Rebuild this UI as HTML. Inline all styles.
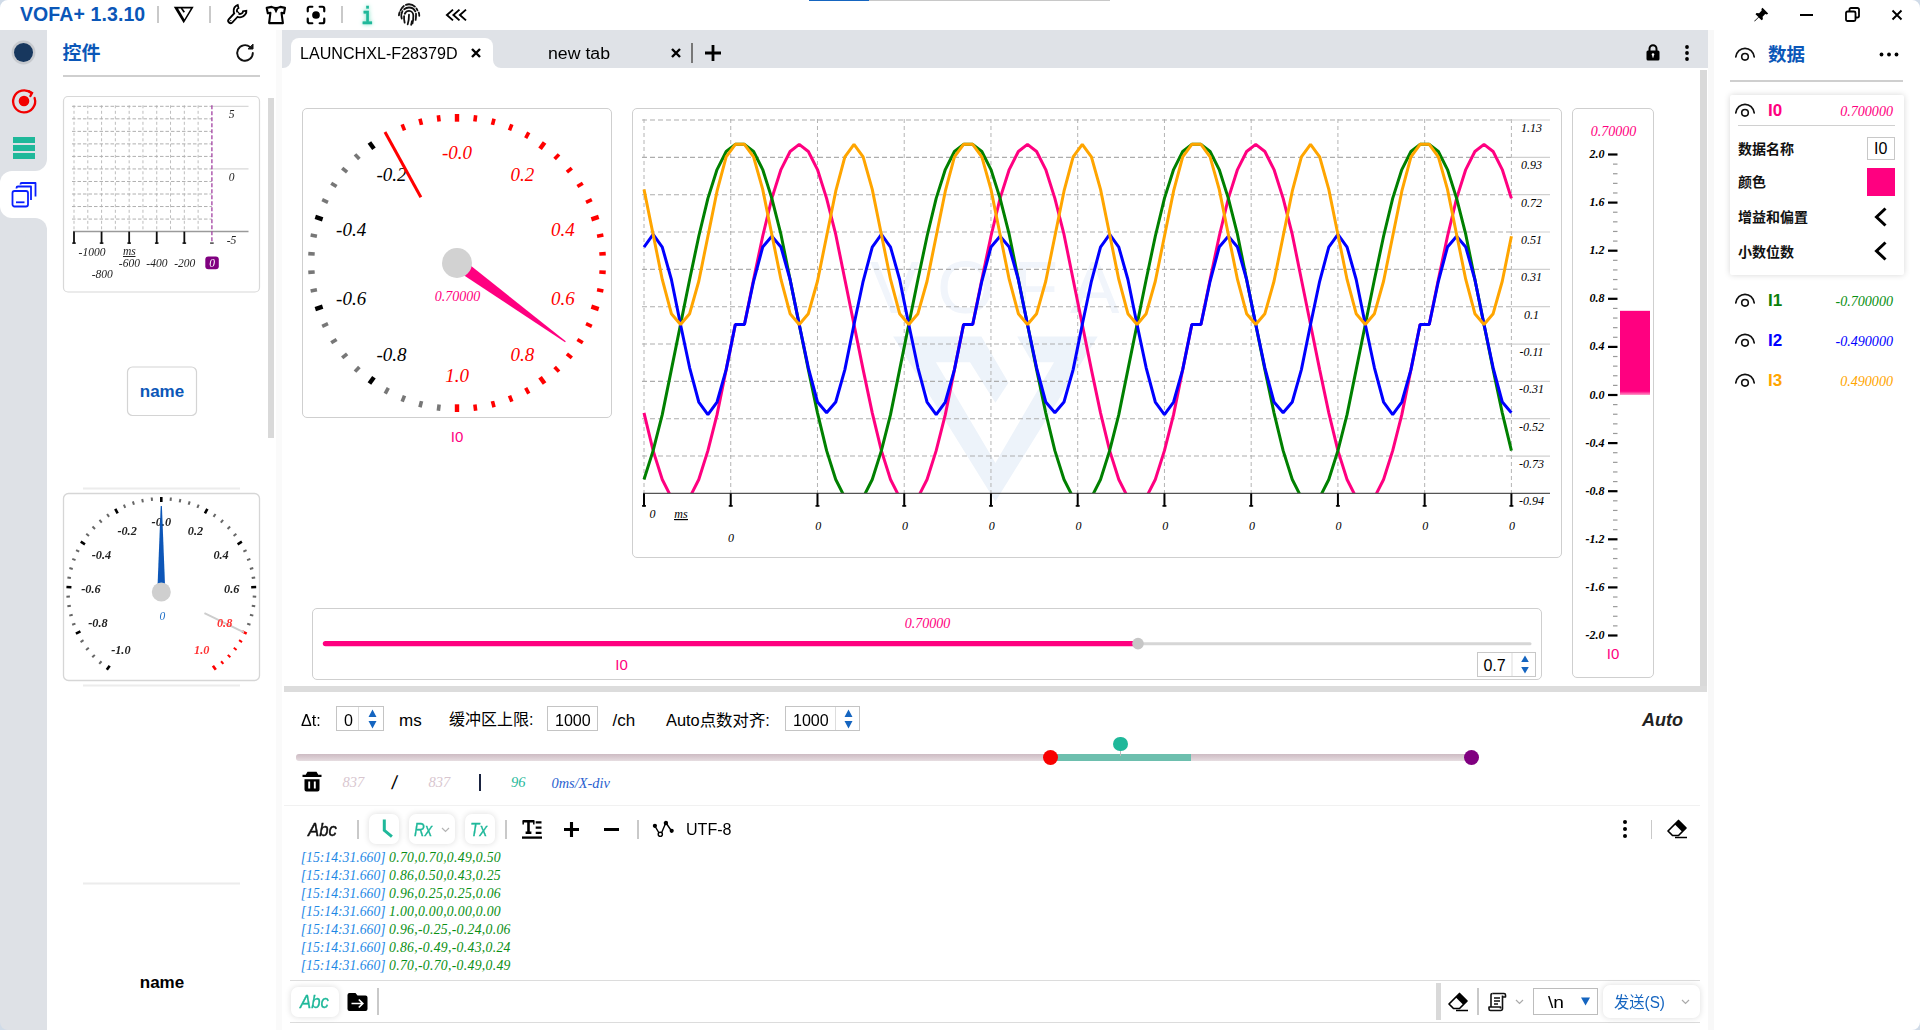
<!DOCTYPE html>
<html lang="zh-CN">
<head>
<meta charset="utf-8">
<title>VOFA+ 1.3.10</title>
<style>
*{box-sizing:border-box;margin:0;padding:0}
html,body{width:1920px;height:1030px;overflow:hidden;background:#fff}
body{position:relative;font-family:"Liberation Sans","Noto Sans CJK SC",sans-serif;color:#000;font-size:16px}
.abs{position:absolute}
.t{position:absolute;white-space:nowrap;line-height:1}
.ser{font-family:"Liberation Serif","Noto Serif CJK SC",serif;font-style:italic}
.box{position:absolute;border:1px solid #cfcfcf;border-radius:5px;background:#fff}
svg{position:absolute;overflow:visible}
.vsep{position:absolute;width:2px;background:#c9c9c9}
</style>
</head>
<body>
<!-- ===== background regions ===== -->
<div class="abs" style="left:0;top:30px;width:47px;height:1000px;background:#dee1e6"></div>
<div class="abs" style="left:276px;top:30px;width:6px;height:1000px;background:#fafafa"></div>
<div class="abs" style="left:1708px;top:30px;width:6px;height:1000px;background:#f8f8f8"></div>
<!-- top progress line -->
<div class="abs" style="left:809px;top:0;width:60px;height:1px;background:#1565c0"></div>
<div class="abs" style="left:869px;top:0;width:241px;height:1px;background:#c8c8c8"></div>

<!-- ===== title bar ===== -->
<div class="t" style="left:20px;top:4.500px;font-size:19.500px;font-weight:bold;color:#0b57b8;letter-spacing:0.1px">VOFA+ 1.3.10</div>
<div class="vsep" style="left:157px;top:6px;height:17px"></div>
<div class="vsep" style="left:209px;top:6px;height:17px"></div>
<div class="vsep" style="left:341px;top:6px;height:17px"></div>
<!-- V logo -->
<svg style="left:0;top:0" width="200" height="30" viewBox="0 0 200 30"><path d="M173.800 6.800h19.900L183.700 23.200z M178.100 8.400h12.700L184.400 19.200z" fill="#000" fill-rule="evenodd"/><path d="M181.300 8l3 4.200" fill="none" stroke="#000" stroke-width="1.700"/></svg>
<!-- wrench -->
<svg style="left:0;top:0" width="260" height="30" viewBox="0 0 260 30" fill="none"><path d="M238.92 6.12A4.8 4.8 0 1 0 244.74 10.05" stroke="#000" stroke-width="5.100"/><path d="M236.600 14.300 230.600 20.800" stroke="#000" stroke-width="6.600" stroke-linecap="round"/><path d="M237.32 6.82A4.8 4.8 0 1 0 244.70 11.80" stroke="#fff" stroke-width="1.500"/><path d="M237 13.900 230.700 20.700" stroke="#fff" stroke-width="3" stroke-linecap="round"/><circle cx="230.800" cy="20.600" r="0.700" fill="#000"/></svg>
<!-- t-shirt -->
<svg style="left:0;top:0" width="300" height="30" viewBox="0 0 300 30"><path d="M266.700 7.900 271.600 6.900Q276 9.200 280.400 6.900L285 7.900 284 13.300 281.500 12.800 282.900 23.100H269.100L270.400 12.800 267.800 13.300Z" fill="none" stroke="#000" stroke-width="2.100" stroke-linejoin="round"/><path d="M273.700 8.400h4.600L276 13.300z" fill="#000"/></svg>
<!-- focus -->
<svg style="left:305px;top:4px" width="22" height="22" viewBox="0 0 24 24" fill="none" stroke="#000" stroke-width="2.4" stroke-linecap="round" stroke-linejoin="round"><path d="M3 8V5a2 2 0 0 1 2-2h3M16 3h3a2 2 0 0 1 2 2v3M21 16v3a2 2 0 0 1-2 2h-3M8 21H5a2 2 0 0 1-2-2v-3"/><circle cx="12" cy="12" r="4.2" fill="#000" stroke="none"/></svg>
<!-- i -->
<div class="t" style="left:360.100px;top:5.500px;font-family:'Liberation Mono',monospace;font-weight:bold;font-size:24px;transform:scaleX(0.76);color:#1fb89a;-webkit-text-stroke:0.35px #1fb89a;text-shadow:0 0 6px #8fe3cc,0 0 4px #a8ebd9">i</div>
<!-- fingerprint -->
<svg style="left:395.500px;top:1.200px" width="26" height="26" viewBox="0 0 24 24" fill="none" stroke="#111" stroke-width="1.650" stroke-linecap="round"><path d="M4.200 8.600C5.800 5 8.700 3 12 3s6.200 2 7.800 5.600" stroke-dasharray="5 2.200 9 2.200 20"/><path d="M5.300 16.200c-.7-2.700-.4-5.400 1-7.300C7.700 7 9.700 6 12 6c3.700 0 6.500 2.900 6.500 6.500 0 1.700 0 3.300-.4 5" stroke-dasharray="7 2.300 12 2.300 30"/><path d="M8 20c-.6-2.200-.8-4.500-.4-6.700.4-2.300 2.100-4.200 4.400-4.200 2.400 0 4 2 4 4.400 0 2.700-.2 5-.8 7.200" stroke-dasharray="6 2.300 30"/><path d="M12 12.600c0 3.400-.2 6-1.200 8.900"/><path d="M14 22c.3-1.100.6-2.300.7-3.400"/><path d="M2.700 13.200c.1-1.100.3-2 .7-2.900M21 10.600c.3 1 .5 2 .5 3.100"/></svg>
<!-- <<< -->
<svg style="left:445px;top:8px" width="22" height="14" viewBox="0 0 22 14" fill="none" stroke="#000" stroke-width="1.900" stroke-linejoin="miter"><path d="M8 1.600 1.900 7 8 12.400M14.500 1.600 8.400 7l6.100 5.400M21 1.600 14.900 7l6.100 5.400"/></svg>
<!-- window controls -->
<svg style="left:1752px;top:6px" width="18" height="18" viewBox="0 0 18 18"><path d="M10.500 1.800 16.200 7.500l-1.300.9-1.700-.3-2.600 2.600.3 2.600-1.300 1-2.900-2.900-4 4.200-.5-.5 4.200-4L3.500 8.200l1-1.300 2.600.3 2.600-2.600-.3-1.700z" fill="#000"/></svg>
<div class="abs" style="left:1800px;top:14px;width:13px;height:2px;background:#000"></div>
<svg style="left:1845px;top:7px" width="15" height="15" viewBox="0 0 15 15" fill="none" stroke="#000" stroke-width="1.8"><rect x="1" y="4.500" width="9.500" height="9.500" rx="1.500"/><path d="M4.500 4.500V2.500a1.500 1.500 0 0 1 1.500-1.500h6.500A1.500 1.500 0 0 1 14 2.500V9a1.500 1.500 0 0 1-1.500 1.500h-2"/></svg>
<svg style="left:1891px;top:9px" width="12" height="12" viewBox="0 0 12 12" stroke="#000" stroke-width="1.900"><path d="M1.500 1.500l9 9M10.500 1.500l-9 9"/></svg>

<!-- ===== left icon strip ===== -->
<div class="abs" style="left:0;top:171px;width:47px;height:47px;background:#fff;border-radius:12px 0 0 12px"></div>
<div class="abs" style="left:35px;top:159px;width:12px;height:12px;background:#fff"></div>
<div class="abs" style="left:23px;top:147px;width:24px;height:24px;border-radius:12px;background:#dee1e6"></div>
<div class="abs" style="left:35px;top:218px;width:12px;height:12px;background:#fff"></div>
<div class="abs" style="left:23px;top:218px;width:24px;height:24px;border-radius:12px;background:#dee1e6"></div>
<div class="abs" style="left:13.700px;top:42.700px;width:19.600px;height:19.600px;border-radius:50%;background:#17375e;box-shadow:0 0 0 2.400px #c6c9ce"></div>
<svg style="left:10px;top:87px" width="28" height="28" viewBox="0 0 28 28" fill="none" stroke="#f20000" stroke-width="2.300" stroke-linecap="round"><path d="M21.500 6.200A11 11 0 1 0 24.600 11"/><path d="M19 4.300l3 1.700-1.600 3"/><circle cx="14" cy="14" r="5.300" fill="#f20000" stroke="none"/></svg>
<div class="abs" style="left:13px;top:137px;width:22px;height:6px;background:#1fb89a"></div>
<div class="abs" style="left:13px;top:145px;width:22px;height:6px;background:#1fb89a"></div>
<div class="abs" style="left:13px;top:153px;width:22px;height:6px;background:#1fb89a"></div>
<svg style="left:11px;top:182px" width="26" height="26" viewBox="0 0 26 26" fill="none" stroke="#0a1fff" stroke-width="1.800" stroke-linejoin="round"><rect x="1.500" y="9" width="15.500" height="15.500" rx="2"/><path d="M5.500 6.500V6a1.500 1.500 0 0 1 1.500-1.500h13V18"/><path d="M9.500 2.500V2.200a1.200 1.200 0 0 1 1.200-1.200H24.500v13.500"/><path d="M5 20.300h8.500" stroke-width="1.800"/></svg>

<!-- ===== left panel ===== -->
<div class="t" style="left:62.500px;top:43.500px;font-size:19px;font-weight:bold;color:#0b57b8">控件</div>
<svg style="left:234px;top:42px" width="22" height="22" viewBox="0 0 22 22" fill="none" stroke="#111" stroke-width="1.900" stroke-linecap="round" stroke-linejoin="round"><path d="M18.800 11A7.800 7.800 0 1 1 16 5"/><path d="M19 2.500V7h-4.500z" fill="#111" stroke-width="1"/></svg>
<div class="abs" style="left:63px;top:75px;width:197px;height:2px;background:#cfcfcf"></div>
<div class="abs" style="left:268px;top:98px;width:6px;height:340px;background:#d9d9d9"></div>
<!-- ===== tab bar ===== -->
<div class="abs" style="left:282px;top:30px;width:1426px;height:38px;background:#dfe2e7"></div>
<div class="abs" style="left:291px;top:38px;width:202px;height:30px;background:#fff;border-radius:8px 8px 0 0"></div>
<svg style="left:283px;top:60px" width="8" height="8" viewBox="0 0 8 8"><path d="M8 0v8H0A8 8 0 0 0 8 0z" fill="#fff"/></svg>
<svg style="left:493px;top:60px" width="8" height="8" viewBox="0 0 8 8"><path d="M0 0v8h8A8 8 0 0 1 0 0z" fill="#fff"/></svg>
<div class="t" style="left:300px;top:44.500px;font-size:17.300px;transform-origin:0 50%;transform:scaleX(0.932)">LAUNCHXL-F28379D</div>
<svg style="left:471px;top:48px" width="10" height="10" viewBox="0 0 10 10" stroke="#000" stroke-width="2.400"><path d="M1 1l8 8M9 1l-8 8"/></svg>
<div class="t" style="left:548px;top:44.500px;font-size:17.300px;transform-origin:0 50%;transform:scaleX(1.025)">new tab</div>
<svg style="left:671px;top:48px" width="10" height="10" viewBox="0 0 10 10" stroke="#000" stroke-width="2.400"><path d="M1 1l8 8M9 1l-8 8"/></svg>
<div class="abs" style="left:691px;top:43px;width:2px;height:20px;background:#777"></div>
<svg style="left:705px;top:45px" width="16" height="16" viewBox="0 0 16 16" stroke="#000" stroke-width="2.800"><path d="M8 0v16M0 8h16"/></svg>
<!-- lock -->
<svg style="left:1646px;top:44px" width="14" height="17" viewBox="0 0 14 17"><path d="M3.500 7V4.800a3.500 3.500 0 0 1 7 0V7" fill="none" stroke="#000" stroke-width="2"/><rect x="0.500" y="6.500" width="13" height="10" rx="1.500" fill="#000"/><circle cx="7" cy="10.500" r="1.300" fill="#fff"/><rect x="6.400" y="10.500" width="1.200" height="3" fill="#fff"/></svg>
<svg style="left:1684px;top:44px" width="6" height="18" viewBox="0 0 6 18"><circle cx="3" cy="3" r="1.900"/><circle cx="3" cy="9" r="1.900"/><circle cx="3" cy="15" r="1.900"/></svg>
<!-- main area scrollbars -->
<div class="abs" style="left:1700px;top:70px;width:7px;height:617px;background:#d9d9d9"></div>
<div class="abs" style="left:284px;top:686px;width:1423px;height:6px;background:#dcdcdc"></div>
<!-- ===== main widgets ===== -->
<div class="box" style="left:302px;top:108px;width:310px;height:310px"></div>
<svg style="left:0;top:0" width="1920" height="1030" viewBox="0 0 1920 1030">
<defs><filter id="gl" x="-20%" y="-20%" width="140%" height="140%"><feGaussianBlur stdDeviation="0.7"/></filter></defs>
<line x1="457" y1="404.3" x2="457" y2="412" stroke="#f00" stroke-width="4.4"/>
<line x1="439.13" y1="404.48" x2="438.33" y2="410.83" stroke="#777" stroke-width="3.6"/>
<line x1="421.54" y1="401.12" x2="419.95" y2="407.32" stroke="#777" stroke-width="3.6"/>
<line x1="404.51" y1="395.59" x2="402.15" y2="401.54" stroke="#777" stroke-width="3.6"/>
<line x1="388.3" y1="387.96" x2="385.22" y2="393.57" stroke="#777" stroke-width="3.6"/>
<line x1="373.95" y1="377.31" x2="369.42" y2="383.54" stroke="#000" stroke-width="4.4"/>
<line x1="359.38" y1="366.95" x2="355" y2="371.62" stroke="#777" stroke-width="3.6"/>
<line x1="347.12" y1="353.9" x2="342.19" y2="357.98" stroke="#777" stroke-width="3.6"/>
<line x1="336.6" y1="339.41" x2="331.2" y2="342.84" stroke="#777" stroke-width="3.6"/>
<line x1="327.97" y1="323.72" x2="322.18" y2="326.44" stroke="#777" stroke-width="3.6"/>
<line x1="322.62" y1="306.66" x2="315.29" y2="309.04" stroke="#000" stroke-width="4.4"/>
<line x1="316.93" y1="289.72" x2="310.64" y2="290.92" stroke="#777" stroke-width="3.6"/>
<line x1="314.68" y1="271.95" x2="308.29" y2="272.36" stroke="#777" stroke-width="3.6"/>
<line x1="314.68" y1="254.05" x2="308.29" y2="253.64" stroke="#777" stroke-width="3.6"/>
<line x1="316.93" y1="236.28" x2="310.64" y2="235.08" stroke="#777" stroke-width="3.6"/>
<line x1="322.62" y1="219.34" x2="315.29" y2="216.96" stroke="#000" stroke-width="4.4"/>
<line x1="327.97" y1="202.28" x2="322.18" y2="199.56" stroke="#777" stroke-width="3.6"/>
<line x1="336.6" y1="186.59" x2="331.2" y2="183.16" stroke="#777" stroke-width="3.6"/>
<line x1="347.12" y1="172.1" x2="342.19" y2="168.02" stroke="#777" stroke-width="3.6"/>
<line x1="359.38" y1="159.05" x2="355" y2="154.38" stroke="#777" stroke-width="3.6"/>
<line x1="373.95" y1="148.69" x2="369.42" y2="142.46" stroke="#000" stroke-width="4.4"/>
<line x1="404.51" y1="130.41" x2="402.15" y2="124.46" stroke="#f00" stroke-width="3.6"/>
<line x1="421.54" y1="124.88" x2="419.95" y2="118.68" stroke="#f00" stroke-width="3.6"/>
<line x1="439.13" y1="121.52" x2="438.33" y2="115.17" stroke="#f00" stroke-width="3.6"/>
<line x1="457" y1="121.7" x2="457" y2="114" stroke="#f00" stroke-width="4.4"/>
<line x1="474.87" y1="121.52" x2="475.67" y2="115.17" stroke="#f00" stroke-width="3.6"/>
<line x1="492.46" y1="124.88" x2="494.05" y2="118.68" stroke="#f00" stroke-width="3.6"/>
<line x1="509.49" y1="130.41" x2="511.85" y2="124.46" stroke="#f00" stroke-width="3.6"/>
<line x1="525.7" y1="138.04" x2="528.78" y2="132.43" stroke="#f00" stroke-width="3.6"/>
<line x1="540.05" y1="148.69" x2="544.58" y2="142.46" stroke="#f00" stroke-width="4.4"/>
<line x1="554.62" y1="159.05" x2="559" y2="154.38" stroke="#f00" stroke-width="3.6"/>
<line x1="566.88" y1="172.1" x2="571.81" y2="168.02" stroke="#f00" stroke-width="3.6"/>
<line x1="577.4" y1="186.59" x2="582.8" y2="183.16" stroke="#f00" stroke-width="3.6"/>
<line x1="586.03" y1="202.28" x2="591.82" y2="199.56" stroke="#f00" stroke-width="3.6"/>
<line x1="591.38" y1="219.34" x2="598.71" y2="216.96" stroke="#f00" stroke-width="4.4"/>
<line x1="597.07" y1="236.28" x2="603.36" y2="235.08" stroke="#f00" stroke-width="3.6"/>
<line x1="599.32" y1="254.05" x2="605.71" y2="253.64" stroke="#f00" stroke-width="3.6"/>
<line x1="599.32" y1="271.95" x2="605.71" y2="272.36" stroke="#f00" stroke-width="3.6"/>
<line x1="597.07" y1="289.72" x2="603.36" y2="290.92" stroke="#f00" stroke-width="3.6"/>
<line x1="591.38" y1="306.66" x2="598.71" y2="309.04" stroke="#f00" stroke-width="4.4"/>
<line x1="586.03" y1="323.72" x2="591.82" y2="326.44" stroke="#f00" stroke-width="3.6"/>
<line x1="577.4" y1="339.41" x2="582.8" y2="342.84" stroke="#f00" stroke-width="3.6"/>
<line x1="566.88" y1="353.9" x2="571.81" y2="357.98" stroke="#f00" stroke-width="3.6"/>
<line x1="554.62" y1="366.95" x2="559" y2="371.62" stroke="#f00" stroke-width="3.6"/>
<line x1="540.05" y1="377.31" x2="544.58" y2="383.54" stroke="#f00" stroke-width="4.4"/>
<line x1="525.7" y1="387.96" x2="528.78" y2="393.57" stroke="#f00" stroke-width="3.6"/>
<line x1="509.49" y1="395.59" x2="511.85" y2="401.54" stroke="#f00" stroke-width="3.6"/>
<line x1="492.46" y1="401.12" x2="494.05" y2="407.32" stroke="#f00" stroke-width="3.6"/>
<line x1="474.87" y1="404.48" x2="475.67" y2="410.83" stroke="#f00" stroke-width="3.6"/>
<text x="391.58" y="360.64" text-anchor="middle" font-family="Liberation Serif, serif" font-style="italic" font-size="19" fill="#000">-0.8</text>
<text x="351.15" y="304.99" text-anchor="middle" font-family="Liberation Serif, serif" font-style="italic" font-size="19" fill="#000">-0.6</text>
<text x="351.15" y="236.21" text-anchor="middle" font-family="Liberation Serif, serif" font-style="italic" font-size="19" fill="#000">-0.4</text>
<text x="391.58" y="180.56" text-anchor="middle" font-family="Liberation Serif, serif" font-style="italic" font-size="19" fill="#000">-0.2</text>
<text x="457" y="159.3" text-anchor="middle" font-family="Liberation Serif, serif" font-style="italic" font-size="19" fill="#f00">-0.0</text>
<text x="522.42" y="180.56" text-anchor="middle" font-family="Liberation Serif, serif" font-style="italic" font-size="19" fill="#f00">0.2</text>
<text x="562.85" y="236.21" text-anchor="middle" font-family="Liberation Serif, serif" font-style="italic" font-size="19" fill="#f00">0.4</text>
<text x="562.85" y="304.99" text-anchor="middle" font-family="Liberation Serif, serif" font-style="italic" font-size="19" fill="#f00">0.6</text>
<text x="522.42" y="360.64" text-anchor="middle" font-family="Liberation Serif, serif" font-style="italic" font-size="19" fill="#f00">0.8</text>
<text x="457" y="381.9" text-anchor="middle" font-family="Liberation Serif, serif" font-style="italic" font-size="19" fill="#f00">1.0</text>
<line x1="420.87" y1="197.28" x2="384.98" y2="131.99" stroke="#f00" stroke-width="3"/>
<polygon filter="url(#gl)" points="453.18,268.26 565.06,342.25 565.76,341.28 460.82,257.74" fill="#ff0080"/>
<circle cx="457" cy="263" r="15" fill="#d2d2d2"/>
<text x="457.5" y="300.5" text-anchor="middle" font-family="Liberation Serif, serif" font-style="italic" font-size="14" fill="#ff0080">0.70000</text>
<text x="457" y="442" text-anchor="middle" font-family="Liberation Sans, sans-serif" font-size="15" fill="#ff0080">I0</text>
<rect x="632.5" y="108.5" width="929" height="449" rx="4.5" fill="#fff" stroke="#cfcfcf"/>
<g fill="#edf3fa">
<path d="M893.1 336.4H981.4L1008.5 382.7 995.4 402.8 970 362.2H935.9L995.4 463.1V501.6z M1017.2 336.4H1097.7L995.4 501.6V463.1L1054 362.2H1032.1z"/>
<text x="870 937 1013 1070" y="313" font-family="Liberation Sans, sans-serif" font-size="74" fill="#f1f5fb">VOFA</text>
</g>
<line x1="644" y1="119" x2="644" y2="493.4" stroke="#b4b4b4" stroke-width="1" stroke-dasharray="4 3"/>
<line x1="730.74" y1="119" x2="730.74" y2="493.4" stroke="#b4b4b4" stroke-width="1" stroke-dasharray="4 3"/>
<line x1="817.48" y1="119" x2="817.48" y2="493.4" stroke="#b4b4b4" stroke-width="1" stroke-dasharray="4 3"/>
<line x1="904.22" y1="119" x2="904.22" y2="493.4" stroke="#b4b4b4" stroke-width="1" stroke-dasharray="4 3"/>
<line x1="990.96" y1="119" x2="990.96" y2="493.4" stroke="#b4b4b4" stroke-width="1" stroke-dasharray="4 3"/>
<line x1="1077.7" y1="119" x2="1077.7" y2="493.4" stroke="#b4b4b4" stroke-width="1" stroke-dasharray="4 3"/>
<line x1="1164.44" y1="119" x2="1164.44" y2="493.4" stroke="#b4b4b4" stroke-width="1" stroke-dasharray="4 3"/>
<line x1="1251.18" y1="119" x2="1251.18" y2="493.4" stroke="#b4b4b4" stroke-width="1" stroke-dasharray="4 3"/>
<line x1="1337.92" y1="119" x2="1337.92" y2="493.4" stroke="#b4b4b4" stroke-width="1" stroke-dasharray="4 3"/>
<line x1="1424.66" y1="119" x2="1424.66" y2="493.4" stroke="#b4b4b4" stroke-width="1" stroke-dasharray="4 3"/>
<line x1="1511.4" y1="119" x2="1511.4" y2="493.4" stroke="#b4b4b4" stroke-width="1" stroke-dasharray="4 3"/>
<line x1="642" y1="120" x2="1511.4" y2="120" stroke="#adadad" stroke-width="1.1" stroke-dasharray="5 3"/>
<line x1="1511.4" y1="120" x2="1550" y2="120" stroke="#d0d0d0" stroke-width="1.2"/>
<line x1="642" y1="157.34" x2="1511.4" y2="157.34" stroke="#adadad" stroke-width="1.1" stroke-dasharray="5 3"/>
<line x1="1511.4" y1="157.34" x2="1550" y2="157.34" stroke="#d0d0d0" stroke-width="1.2"/>
<line x1="642" y1="194.68" x2="1511.4" y2="194.68" stroke="#adadad" stroke-width="1.1" stroke-dasharray="5 3"/>
<line x1="1511.4" y1="194.68" x2="1550" y2="194.68" stroke="#d0d0d0" stroke-width="1.2"/>
<line x1="642" y1="232.02" x2="1511.4" y2="232.02" stroke="#adadad" stroke-width="1.1" stroke-dasharray="5 3"/>
<line x1="1511.4" y1="232.02" x2="1550" y2="232.02" stroke="#d0d0d0" stroke-width="1.2"/>
<line x1="642" y1="269.36" x2="1511.4" y2="269.36" stroke="#adadad" stroke-width="1.1" stroke-dasharray="5 3"/>
<line x1="1511.4" y1="269.36" x2="1550" y2="269.36" stroke="#d0d0d0" stroke-width="1.2"/>
<line x1="642" y1="306.7" x2="1511.4" y2="306.7" stroke="#adadad" stroke-width="1.1" stroke-dasharray="5 3"/>
<line x1="1511.4" y1="306.7" x2="1550" y2="306.7" stroke="#d0d0d0" stroke-width="1.2"/>
<line x1="642" y1="344.04" x2="1511.4" y2="344.04" stroke="#adadad" stroke-width="1.1" stroke-dasharray="5 3"/>
<line x1="1511.4" y1="344.04" x2="1550" y2="344.04" stroke="#d0d0d0" stroke-width="1.2"/>
<line x1="642" y1="381.38" x2="1511.4" y2="381.38" stroke="#adadad" stroke-width="1.1" stroke-dasharray="5 3"/>
<line x1="1511.4" y1="381.38" x2="1550" y2="381.38" stroke="#d0d0d0" stroke-width="1.2"/>
<line x1="642" y1="418.72" x2="1511.4" y2="418.72" stroke="#adadad" stroke-width="1.1" stroke-dasharray="5 3"/>
<line x1="1511.4" y1="418.72" x2="1550" y2="418.72" stroke="#d0d0d0" stroke-width="1.2"/>
<line x1="642" y1="456.06" x2="1511.4" y2="456.06" stroke="#adadad" stroke-width="1.1" stroke-dasharray="5 3"/>
<line x1="1511.4" y1="456.06" x2="1550" y2="456.06" stroke="#d0d0d0" stroke-width="1.2"/>
<clipPath id="cc"><rect x="642" y="118" width="871.4" height="374.9"/></clipPath>
<g clip-path="url(#cc)" fill="none" stroke-width="3" stroke-linejoin="bevel" stroke-linecap="butt">
<polyline points="644,412.82 653.13,450.67 662.26,479.5 671.39,497.52 680.52,504.73 689.65,497.52 698.78,479.5 707.91,450.67 717.04,414.63 726.17,369.58 735.31,324.53 744.44,324.53 753.57,279.48 762.7,236.23 771.83,198.39 780.96,169.56 790.09,151.53 799.22,144.33 808.35,151.53 817.48,169.56 826.61,198.39 835.74,234.43 844.87,279.48 854,324.53 863.13,369.58 872.26,412.82 881.39,450.67 890.52,479.5 899.65,497.52 908.79,504.73 917.92,497.52 927.05,479.5 936.18,450.67 945.31,414.63 954.44,369.58 963.57,324.53 972.7,324.53 981.83,279.48 990.96,236.23 1000.09,198.39 1009.22,169.56 1018.35,151.53 1027.48,144.33 1036.61,151.53 1045.74,169.56 1054.87,198.39 1064,234.43 1073.13,279.48 1082.27,324.53 1091.4,369.58 1100.53,412.82 1109.66,450.67 1118.79,479.5 1127.92,497.52 1137.05,504.73 1146.18,497.52 1155.31,479.5 1164.44,450.67 1173.57,414.63 1182.7,369.58 1191.83,324.53 1200.96,324.53 1210.09,279.48 1219.22,236.23 1228.35,198.39 1237.48,169.56 1246.61,151.53 1255.75,144.33 1264.88,151.53 1274.01,169.56 1283.14,198.39 1292.27,234.43 1301.4,279.48 1310.53,324.53 1319.66,369.58 1328.79,412.82 1337.92,450.67 1347.05,479.5 1356.18,497.52 1365.31,504.73 1374.44,497.52 1383.57,479.5 1392.7,450.67 1401.83,414.63 1410.96,369.58 1420.09,324.53 1429.23,324.53 1438.36,279.48 1447.49,236.23 1456.62,198.39 1465.75,169.56 1474.88,151.53 1484.01,144.33 1493.14,151.53 1502.27,169.56 1511.4,198.39" stroke="#ff0080"/>
<polyline points="644,479.5 653.13,450.67 662.26,414.63 671.39,369.58 680.52,324.53 689.65,279.48 698.78,236.23 707.91,198.39 717.04,169.56 726.17,151.53 735.31,144.33 744.44,144.33 753.57,151.53 762.7,169.56 771.83,198.39 780.96,234.43 790.09,279.48 799.22,324.53 808.35,369.58 817.48,412.82 826.61,450.67 835.74,479.5 844.87,497.52 854,504.73 863.13,497.52 872.26,479.5 881.39,450.67 890.52,414.63 899.65,369.58 908.79,324.53 917.92,279.48 927.05,236.23 936.18,198.39 945.31,169.56 954.44,151.53 963.57,144.33 972.7,144.33 981.83,151.53 990.96,169.56 1000.09,198.39 1009.22,234.43 1018.35,279.48 1027.48,324.53 1036.61,369.58 1045.74,412.82 1054.87,450.67 1064,479.5 1073.13,497.52 1082.27,504.73 1091.4,497.52 1100.53,479.5 1109.66,450.67 1118.79,414.63 1127.92,369.58 1137.05,324.53 1146.18,279.48 1155.31,236.23 1164.44,198.39 1173.57,169.56 1182.7,151.53 1191.83,144.33 1200.96,144.33 1210.09,151.53 1219.22,169.56 1228.35,198.39 1237.48,234.43 1246.61,279.48 1255.75,324.53 1264.88,369.58 1274.01,412.82 1283.14,450.67 1292.27,479.5 1301.4,497.52 1310.53,504.73 1319.66,497.52 1328.79,479.5 1337.92,450.67 1347.05,414.63 1356.18,369.58 1365.31,324.53 1374.44,279.48 1383.57,236.23 1392.7,198.39 1401.83,169.56 1410.96,151.53 1420.09,144.33 1429.23,144.33 1438.36,151.53 1447.49,169.56 1456.62,198.39 1465.75,234.43 1474.88,279.48 1484.01,324.53 1493.14,369.58 1502.27,412.82 1511.4,450.67" stroke="#008000"/>
<polyline points="644,247.04 653.13,234.43 662.26,247.04 671.39,279.48 680.52,324.53 689.65,367.77 698.78,402.01 707.91,414.63 717.04,402.01 726.17,369.58 735.31,324.53 744.44,324.53 753.57,281.28 762.7,247.04 771.83,236.23 780.96,247.04 790.09,279.48 799.22,324.53 808.35,367.77 817.48,402.01 826.61,412.82 835.74,402.01 844.87,369.58 854,324.53 863.13,281.28 872.26,247.04 881.39,234.43 890.52,247.04 899.65,279.48 908.79,324.53 917.92,367.77 927.05,402.01 936.18,414.63 945.31,402.01 954.44,369.58 963.57,324.53 972.7,324.53 981.83,281.28 990.96,247.04 1000.09,236.23 1009.22,247.04 1018.35,279.48 1027.48,324.53 1036.61,367.77 1045.74,402.01 1054.87,412.82 1064,402.01 1073.13,369.58 1082.27,324.53 1091.4,281.28 1100.53,247.04 1109.66,234.43 1118.79,247.04 1127.92,279.48 1137.05,324.53 1146.18,367.77 1155.31,402.01 1164.44,414.63 1173.57,402.01 1182.7,369.58 1191.83,324.53 1200.96,324.53 1210.09,281.28 1219.22,247.04 1228.35,236.23 1237.48,247.04 1246.61,279.48 1255.75,324.53 1264.88,367.77 1274.01,402.01 1283.14,412.82 1292.27,402.01 1301.4,369.58 1310.53,324.53 1319.66,281.28 1328.79,247.04 1337.92,234.43 1347.05,247.04 1356.18,279.48 1365.31,324.53 1374.44,367.77 1383.57,402.01 1392.7,414.63 1401.83,402.01 1410.96,369.58 1420.09,324.53 1429.23,324.53 1438.36,281.28 1447.49,247.04 1456.62,236.23 1465.75,247.04 1474.88,279.48 1484.01,324.53 1493.14,367.77 1502.27,402.01 1511.4,412.82" stroke="#0000ff"/>
<polyline points="644,189.38 653.13,234.43 662.26,279.48 671.39,313.71 680.52,324.53 689.65,313.71 698.78,281.28 707.91,236.23 717.04,191.18 726.17,156.94 735.31,144.33 744.44,144.33 753.57,156.94 762.7,189.38 771.83,234.43 780.96,279.48 790.09,313.71 799.22,324.53 808.35,313.71 817.48,281.28 826.61,236.23 835.74,191.18 844.87,156.94 854,144.33 863.13,156.94 872.26,189.38 881.39,234.43 890.52,279.48 899.65,313.71 908.79,324.53 917.92,313.71 927.05,281.28 936.18,236.23 945.31,191.18 954.44,156.94 963.57,144.33 972.7,144.33 981.83,156.94 990.96,189.38 1000.09,234.43 1009.22,279.48 1018.35,313.71 1027.48,324.53 1036.61,313.71 1045.74,281.28 1054.87,236.23 1064,191.18 1073.13,156.94 1082.27,144.33 1091.4,156.94 1100.53,189.38 1109.66,234.43 1118.79,279.48 1127.92,313.71 1137.05,324.53 1146.18,313.71 1155.31,281.28 1164.44,236.23 1173.57,191.18 1182.7,156.94 1191.83,144.33 1200.96,144.33 1210.09,156.94 1219.22,189.38 1228.35,234.43 1237.48,279.48 1246.61,313.71 1255.75,324.53 1264.88,313.71 1274.01,281.28 1283.14,236.23 1292.27,191.18 1301.4,156.94 1310.53,144.33 1319.66,156.94 1328.79,189.38 1337.92,234.43 1347.05,279.48 1356.18,313.71 1365.31,324.53 1374.44,313.71 1383.57,281.28 1392.7,236.23 1401.83,191.18 1410.96,156.94 1420.09,144.33 1429.23,144.33 1438.36,156.94 1447.49,189.38 1456.62,234.43 1465.75,279.48 1474.88,313.71 1484.01,324.53 1493.14,313.71 1502.27,281.28 1511.4,236.23" stroke="#ffa500"/>
</g>
<line x1="643" y1="493.4" x2="1550" y2="493.4" stroke="#555" stroke-width="1.3"/>
<line x1="644" y1="493.4" x2="644" y2="506.4" stroke="#000" stroke-width="2"/>
<line x1="642" y1="505.9" x2="646" y2="505.9" stroke="#000" stroke-width="1.6"/>
<line x1="730.74" y1="493.4" x2="730.74" y2="506.4" stroke="#000" stroke-width="2"/>
<line x1="728.74" y1="505.9" x2="732.74" y2="505.9" stroke="#000" stroke-width="1.6"/>
<line x1="817.48" y1="493.4" x2="817.48" y2="506.4" stroke="#000" stroke-width="2"/>
<line x1="815.48" y1="505.9" x2="819.48" y2="505.9" stroke="#000" stroke-width="1.6"/>
<line x1="904.22" y1="493.4" x2="904.22" y2="506.4" stroke="#000" stroke-width="2"/>
<line x1="902.22" y1="505.9" x2="906.22" y2="505.9" stroke="#000" stroke-width="1.6"/>
<line x1="990.96" y1="493.4" x2="990.96" y2="506.4" stroke="#000" stroke-width="2"/>
<line x1="988.96" y1="505.9" x2="992.96" y2="505.9" stroke="#000" stroke-width="1.6"/>
<line x1="1077.7" y1="493.4" x2="1077.7" y2="506.4" stroke="#000" stroke-width="2"/>
<line x1="1075.7" y1="505.9" x2="1079.7" y2="505.9" stroke="#000" stroke-width="1.6"/>
<line x1="1164.44" y1="493.4" x2="1164.44" y2="506.4" stroke="#000" stroke-width="2"/>
<line x1="1162.44" y1="505.9" x2="1166.44" y2="505.9" stroke="#000" stroke-width="1.6"/>
<line x1="1251.18" y1="493.4" x2="1251.18" y2="506.4" stroke="#000" stroke-width="2"/>
<line x1="1249.18" y1="505.9" x2="1253.18" y2="505.9" stroke="#000" stroke-width="1.6"/>
<line x1="1337.92" y1="493.4" x2="1337.92" y2="506.4" stroke="#000" stroke-width="2"/>
<line x1="1335.92" y1="505.9" x2="1339.92" y2="505.9" stroke="#000" stroke-width="1.6"/>
<line x1="1424.66" y1="493.4" x2="1424.66" y2="506.4" stroke="#000" stroke-width="2"/>
<line x1="1422.66" y1="505.9" x2="1426.66" y2="505.9" stroke="#000" stroke-width="1.6"/>
<line x1="1511.4" y1="493.4" x2="1511.4" y2="506.4" stroke="#000" stroke-width="2"/>
<line x1="1509.4" y1="505.9" x2="1513.4" y2="505.9" stroke="#000" stroke-width="1.6"/>
<text x="1531.5" y="132" text-anchor="middle" font-family="Liberation Serif, serif" font-style="italic" font-size="12" fill="#000">1.13</text>
<text x="1531.5" y="169.34" text-anchor="middle" font-family="Liberation Serif, serif" font-style="italic" font-size="12" fill="#000">0.93</text>
<text x="1531.5" y="206.68" text-anchor="middle" font-family="Liberation Serif, serif" font-style="italic" font-size="12" fill="#000">0.72</text>
<text x="1531.5" y="244.02" text-anchor="middle" font-family="Liberation Serif, serif" font-style="italic" font-size="12" fill="#000">0.51</text>
<text x="1531.5" y="281.36" text-anchor="middle" font-family="Liberation Serif, serif" font-style="italic" font-size="12" fill="#000">0.31</text>
<text x="1531.5" y="318.7" text-anchor="middle" font-family="Liberation Serif, serif" font-style="italic" font-size="12" fill="#000">0.1</text>
<text x="1531.5" y="356.04" text-anchor="middle" font-family="Liberation Serif, serif" font-style="italic" font-size="12" fill="#000">-0.11</text>
<text x="1531.5" y="393.38" text-anchor="middle" font-family="Liberation Serif, serif" font-style="italic" font-size="12" fill="#000">-0.31</text>
<text x="1531.5" y="430.72" text-anchor="middle" font-family="Liberation Serif, serif" font-style="italic" font-size="12" fill="#000">-0.52</text>
<text x="1531.5" y="468.06" text-anchor="middle" font-family="Liberation Serif, serif" font-style="italic" font-size="12" fill="#000">-0.73</text>
<text x="1531.5" y="505.4" text-anchor="middle" font-family="Liberation Serif, serif" font-style="italic" font-size="12" fill="#000">-0.94</text>
<text x="652.5" y="518" text-anchor="middle" font-family="Liberation Serif, serif" font-style="italic" font-size="12">0</text>
<text x="681" y="518" text-anchor="middle" font-family="Liberation Serif, serif" font-style="italic" font-size="12" text-decoration="underline">ms</text>
<line x1="674" y1="519.5" x2="688" y2="519.5" stroke="#000" stroke-width="1"/>
<text x="731" y="542" text-anchor="middle" font-family="Liberation Serif, serif" font-style="italic" font-size="12">0</text>
<text x="818.18" y="530" text-anchor="middle" font-family="Liberation Serif, serif" font-style="italic" font-size="12">0</text>
<text x="904.92" y="530" text-anchor="middle" font-family="Liberation Serif, serif" font-style="italic" font-size="12">0</text>
<text x="991.66" y="530" text-anchor="middle" font-family="Liberation Serif, serif" font-style="italic" font-size="12">0</text>
<text x="1078.4" y="530" text-anchor="middle" font-family="Liberation Serif, serif" font-style="italic" font-size="12">0</text>
<text x="1165.14" y="530" text-anchor="middle" font-family="Liberation Serif, serif" font-style="italic" font-size="12">0</text>
<text x="1251.88" y="530" text-anchor="middle" font-family="Liberation Serif, serif" font-style="italic" font-size="12">0</text>
<text x="1338.62" y="530" text-anchor="middle" font-family="Liberation Serif, serif" font-style="italic" font-size="12">0</text>
<text x="1425.36" y="530" text-anchor="middle" font-family="Liberation Serif, serif" font-style="italic" font-size="12">0</text>
<text x="1512.1" y="530" text-anchor="middle" font-family="Liberation Serif, serif" font-style="italic" font-size="12">0</text>
<rect x="1572.500" y="108.500" width="81" height="569" rx="4.500" fill="#fff" stroke="#cfcfcf"/>
<text x="1613.500" y="135.500" text-anchor="middle" font-family="Liberation Serif, serif" font-style="italic" font-size="14" fill="#ff0080">0.70000</text>
<line x1="1608" y1="154.5" x2="1617.500" y2="154.5" stroke="#000" stroke-width="2.200"/>
<text x="1604.500" y="158" text-anchor="end" font-family="Liberation Serif, serif" font-style="italic" font-weight="bold" font-size="12">2.0</text>
<line x1="1613" y1="164.12" x2="1617.500" y2="164.12" stroke="#999" stroke-width="1.200"/>
<line x1="1613" y1="173.74" x2="1617.500" y2="173.74" stroke="#999" stroke-width="1.200"/>
<line x1="1613" y1="183.36" x2="1617.500" y2="183.36" stroke="#999" stroke-width="1.200"/>
<line x1="1613" y1="192.98" x2="1617.500" y2="192.98" stroke="#999" stroke-width="1.200"/>
<line x1="1608" y1="202.6" x2="1617.500" y2="202.6" stroke="#000" stroke-width="2.200"/>
<text x="1604.500" y="206.1" text-anchor="end" font-family="Liberation Serif, serif" font-style="italic" font-weight="bold" font-size="12">1.6</text>
<line x1="1613" y1="212.22" x2="1617.500" y2="212.22" stroke="#999" stroke-width="1.200"/>
<line x1="1613" y1="221.84" x2="1617.500" y2="221.84" stroke="#999" stroke-width="1.200"/>
<line x1="1613" y1="231.46" x2="1617.500" y2="231.46" stroke="#999" stroke-width="1.200"/>
<line x1="1613" y1="241.08" x2="1617.500" y2="241.08" stroke="#999" stroke-width="1.200"/>
<line x1="1608" y1="250.7" x2="1617.500" y2="250.7" stroke="#000" stroke-width="2.200"/>
<text x="1604.500" y="254.2" text-anchor="end" font-family="Liberation Serif, serif" font-style="italic" font-weight="bold" font-size="12">1.2</text>
<line x1="1613" y1="260.32" x2="1617.500" y2="260.32" stroke="#999" stroke-width="1.200"/>
<line x1="1613" y1="269.94" x2="1617.500" y2="269.94" stroke="#999" stroke-width="1.200"/>
<line x1="1613" y1="279.56" x2="1617.500" y2="279.56" stroke="#999" stroke-width="1.200"/>
<line x1="1613" y1="289.18" x2="1617.500" y2="289.18" stroke="#999" stroke-width="1.200"/>
<line x1="1608" y1="298.8" x2="1617.500" y2="298.8" stroke="#000" stroke-width="2.200"/>
<text x="1604.500" y="302.3" text-anchor="end" font-family="Liberation Serif, serif" font-style="italic" font-weight="bold" font-size="12">0.8</text>
<line x1="1613" y1="308.42" x2="1617.500" y2="308.42" stroke="#999" stroke-width="1.200"/>
<line x1="1613" y1="318.04" x2="1617.500" y2="318.04" stroke="#999" stroke-width="1.200"/>
<line x1="1613" y1="327.66" x2="1617.500" y2="327.66" stroke="#999" stroke-width="1.200"/>
<line x1="1613" y1="337.28" x2="1617.500" y2="337.28" stroke="#999" stroke-width="1.200"/>
<line x1="1608" y1="346.9" x2="1617.500" y2="346.9" stroke="#000" stroke-width="2.200"/>
<text x="1604.500" y="350.4" text-anchor="end" font-family="Liberation Serif, serif" font-style="italic" font-weight="bold" font-size="12">0.4</text>
<line x1="1613" y1="356.52" x2="1617.500" y2="356.52" stroke="#999" stroke-width="1.200"/>
<line x1="1613" y1="366.14" x2="1617.500" y2="366.14" stroke="#999" stroke-width="1.200"/>
<line x1="1613" y1="375.76" x2="1617.500" y2="375.76" stroke="#999" stroke-width="1.200"/>
<line x1="1613" y1="385.38" x2="1617.500" y2="385.38" stroke="#999" stroke-width="1.200"/>
<line x1="1608" y1="395" x2="1617.500" y2="395" stroke="#000" stroke-width="2.200"/>
<text x="1604.500" y="398.5" text-anchor="end" font-family="Liberation Serif, serif" font-style="italic" font-weight="bold" font-size="12">0.0</text>
<line x1="1613" y1="404.62" x2="1617.500" y2="404.62" stroke="#999" stroke-width="1.200"/>
<line x1="1613" y1="414.24" x2="1617.500" y2="414.24" stroke="#999" stroke-width="1.200"/>
<line x1="1613" y1="423.86" x2="1617.500" y2="423.86" stroke="#999" stroke-width="1.200"/>
<line x1="1613" y1="433.48" x2="1617.500" y2="433.48" stroke="#999" stroke-width="1.200"/>
<line x1="1608" y1="443.1" x2="1617.500" y2="443.1" stroke="#000" stroke-width="2.200"/>
<text x="1604.500" y="446.6" text-anchor="end" font-family="Liberation Serif, serif" font-style="italic" font-weight="bold" font-size="12">-0.4</text>
<line x1="1613" y1="452.72" x2="1617.500" y2="452.72" stroke="#999" stroke-width="1.200"/>
<line x1="1613" y1="462.34" x2="1617.500" y2="462.34" stroke="#999" stroke-width="1.200"/>
<line x1="1613" y1="471.96" x2="1617.500" y2="471.96" stroke="#999" stroke-width="1.200"/>
<line x1="1613" y1="481.58" x2="1617.500" y2="481.58" stroke="#999" stroke-width="1.200"/>
<line x1="1608" y1="491.2" x2="1617.500" y2="491.2" stroke="#000" stroke-width="2.200"/>
<text x="1604.500" y="494.7" text-anchor="end" font-family="Liberation Serif, serif" font-style="italic" font-weight="bold" font-size="12">-0.8</text>
<line x1="1613" y1="500.82" x2="1617.500" y2="500.82" stroke="#999" stroke-width="1.200"/>
<line x1="1613" y1="510.44" x2="1617.500" y2="510.44" stroke="#999" stroke-width="1.200"/>
<line x1="1613" y1="520.06" x2="1617.500" y2="520.06" stroke="#999" stroke-width="1.200"/>
<line x1="1613" y1="529.68" x2="1617.500" y2="529.68" stroke="#999" stroke-width="1.200"/>
<line x1="1608" y1="539.3" x2="1617.500" y2="539.3" stroke="#000" stroke-width="2.200"/>
<text x="1604.500" y="542.8" text-anchor="end" font-family="Liberation Serif, serif" font-style="italic" font-weight="bold" font-size="12">-1.2</text>
<line x1="1613" y1="548.92" x2="1617.500" y2="548.92" stroke="#999" stroke-width="1.200"/>
<line x1="1613" y1="558.54" x2="1617.500" y2="558.54" stroke="#999" stroke-width="1.200"/>
<line x1="1613" y1="568.16" x2="1617.500" y2="568.16" stroke="#999" stroke-width="1.200"/>
<line x1="1613" y1="577.78" x2="1617.500" y2="577.78" stroke="#999" stroke-width="1.200"/>
<line x1="1608" y1="587.4" x2="1617.500" y2="587.4" stroke="#000" stroke-width="2.200"/>
<text x="1604.500" y="590.9" text-anchor="end" font-family="Liberation Serif, serif" font-style="italic" font-weight="bold" font-size="12">-1.6</text>
<line x1="1613" y1="597.02" x2="1617.500" y2="597.02" stroke="#999" stroke-width="1.200"/>
<line x1="1613" y1="606.64" x2="1617.500" y2="606.64" stroke="#999" stroke-width="1.200"/>
<line x1="1613" y1="616.26" x2="1617.500" y2="616.26" stroke="#999" stroke-width="1.200"/>
<line x1="1613" y1="625.88" x2="1617.500" y2="625.88" stroke="#999" stroke-width="1.200"/>
<line x1="1608" y1="635.5" x2="1617.500" y2="635.5" stroke="#000" stroke-width="2.200"/>
<text x="1604.500" y="639" text-anchor="end" font-family="Liberation Serif, serif" font-style="italic" font-weight="bold" font-size="12">-2.0</text>
<defs><linearGradient id="bg" x1="0" y1="0" x2="0" y2="1"><stop offset="0" stop-color="#ff0080"/><stop offset="0.955" stop-color="#ff0080"/><stop offset="1" stop-color="#ff9ccb"/></linearGradient></defs>
<rect x="1620" y="310.82" width="30" height="84.17" fill="url(#bg)"/>
<text x="1613" y="658.800" text-anchor="middle" font-family="Liberation Sans, sans-serif" font-size="15" fill="#ff0080">I0</text>
<rect x="312.500" y="608.500" width="1229" height="71" rx="4.500" fill="#fff" stroke="#cfcfcf"/>
<text x="927.500" y="627.500" text-anchor="middle" font-family="Liberation Serif, serif" font-style="italic" font-size="14" fill="#ff0080">0.70000</text>
<line x1="1138" y1="643.800" x2="1530" y2="643.800" stroke="#d6d6d6" stroke-width="3" stroke-linecap="round"/>
<line x1="325.500" y1="643.600" x2="1138" y2="643.600" stroke="#ff0080" stroke-width="5.400" stroke-linecap="round"/>
<circle cx="1138" cy="643.600" r="5.800" fill="#c6c6c6"/>
<text x="621.500" y="670" text-anchor="middle" font-family="Liberation Sans, sans-serif" font-size="15" fill="#ff0080">I0</text>
<rect x="1477.500" y="652.500" width="58" height="24" fill="#fff" stroke="#c8c8c8"/>
<line x1="1512" y1="653" x2="1512" y2="676" stroke="#ddd"/>
<text x="1494.500" y="670.500" text-anchor="middle" font-family="Liberation Sans, sans-serif" font-size="16">0.7</text>
<path d="M1525 655.500l3.800 6.500h-7.600z M1525 673.500l3.800-6.500h-7.600z" fill="#1565c0"/>
</svg>
<!-- ===== left panel previews ===== -->
<svg style="left:0;top:0" width="290" height="1030" viewBox="0 0 290 1030">
<defs><filter id="gs" x="-20%" y="-20%" width="140%" height="140%"><feGaussianBlur stdDeviation="0.35"/></filter></defs>
<rect x="63.5" y="96.5" width="196" height="195.500" rx="4.500" fill="#fff" stroke="#d8d8d8" stroke-width="1.2"/>
<g filter="url(#gs)">
<line x1="74" y1="105.3" x2="74" y2="231.6" stroke="#bdbdbd" stroke-width="1" stroke-dasharray="3 2.500"/>
<line x1="87.79" y1="105.3" x2="87.79" y2="231.6" stroke="#bdbdbd" stroke-width="1" stroke-dasharray="3 2.500"/>
<line x1="101.58" y1="105.3" x2="101.58" y2="231.6" stroke="#bdbdbd" stroke-width="1" stroke-dasharray="3 2.500"/>
<line x1="115.37" y1="105.3" x2="115.37" y2="231.6" stroke="#bdbdbd" stroke-width="1" stroke-dasharray="3 2.500"/>
<line x1="129.16" y1="105.3" x2="129.16" y2="231.6" stroke="#bdbdbd" stroke-width="1" stroke-dasharray="3 2.500"/>
<line x1="142.95" y1="105.3" x2="142.95" y2="231.6" stroke="#bdbdbd" stroke-width="1" stroke-dasharray="3 2.500"/>
<line x1="156.74" y1="105.3" x2="156.74" y2="231.6" stroke="#bdbdbd" stroke-width="1" stroke-dasharray="3 2.500"/>
<line x1="170.53" y1="105.3" x2="170.53" y2="231.6" stroke="#bdbdbd" stroke-width="1" stroke-dasharray="3 2.500"/>
<line x1="184.32" y1="105.3" x2="184.32" y2="231.6" stroke="#bdbdbd" stroke-width="1" stroke-dasharray="3 2.500"/>
<line x1="198.11" y1="105.3" x2="198.11" y2="231.6" stroke="#bdbdbd" stroke-width="1" stroke-dasharray="3 2.500"/>
<line x1="72" y1="106.3" x2="211.9" y2="106.3" stroke="#b0b0b0" stroke-width="1" stroke-dasharray="3.500 2"/>
<line x1="72" y1="118.83" x2="211.9" y2="118.83" stroke="#b0b0b0" stroke-width="1" stroke-dasharray="3.500 2"/>
<line x1="72" y1="131.36" x2="211.9" y2="131.36" stroke="#b0b0b0" stroke-width="1" stroke-dasharray="3.500 2"/>
<line x1="72" y1="143.89" x2="211.9" y2="143.89" stroke="#b0b0b0" stroke-width="1" stroke-dasharray="3.500 2"/>
<line x1="72" y1="156.42" x2="211.9" y2="156.42" stroke="#b0b0b0" stroke-width="1" stroke-dasharray="3.500 2"/>
<line x1="72" y1="168.95" x2="211.9" y2="168.95" stroke="#b0b0b0" stroke-width="1" stroke-dasharray="3.500 2"/>
<line x1="72" y1="181.48" x2="211.9" y2="181.48" stroke="#b0b0b0" stroke-width="1" stroke-dasharray="3.500 2"/>
<line x1="72" y1="194.01" x2="211.9" y2="194.01" stroke="#b0b0b0" stroke-width="1" stroke-dasharray="3.500 2"/>
<line x1="72" y1="206.54" x2="211.9" y2="206.54" stroke="#b0b0b0" stroke-width="1" stroke-dasharray="3.500 2"/>
<line x1="72" y1="219.07" x2="211.9" y2="219.07" stroke="#b0b0b0" stroke-width="1" stroke-dasharray="3.500 2"/>
<line x1="211.9" y1="106.3" x2="248.500" y2="106.3" stroke="#d8d8d8" stroke-width="1.200"/>
<line x1="211.9" y1="168.95" x2="248.500" y2="168.95" stroke="#d8d8d8" stroke-width="1.200"/>
<line x1="73" y1="231.6" x2="248.500" y2="231.6" stroke="#9a9a9a" stroke-width="1.500"/>
<line x1="74" y1="231.6" x2="74" y2="243.6" stroke="#111" stroke-width="1.800"/>
<line x1="72.2" y1="243.1" x2="75.8" y2="243.1" stroke="#111" stroke-width="1.500"/>
<line x1="101.58" y1="231.6" x2="101.58" y2="243.6" stroke="#111" stroke-width="1.800"/>
<line x1="99.78" y1="243.1" x2="103.38" y2="243.1" stroke="#111" stroke-width="1.500"/>
<line x1="129.16" y1="231.6" x2="129.16" y2="243.6" stroke="#111" stroke-width="1.800"/>
<line x1="127.36" y1="243.1" x2="130.96" y2="243.1" stroke="#111" stroke-width="1.500"/>
<line x1="156.74" y1="231.6" x2="156.74" y2="243.6" stroke="#111" stroke-width="1.800"/>
<line x1="154.94" y1="243.1" x2="158.54" y2="243.1" stroke="#111" stroke-width="1.500"/>
<line x1="184.32" y1="231.6" x2="184.32" y2="243.6" stroke="#111" stroke-width="1.800"/>
<line x1="182.52" y1="243.1" x2="186.12" y2="243.1" stroke="#111" stroke-width="1.500"/>
<line x1="211.9" y1="105.3" x2="211.9" y2="242.6" stroke="#a341a3" stroke-width="1.300" stroke-dasharray="4 2"/>
<line x1="210.1" y1="243.1" x2="213.7" y2="243.1" stroke="#444" stroke-width="1.500"/>
<text x="231.500" y="118.3" text-anchor="middle" font-family="Liberation Serif, serif" font-style="italic" font-size="11.500" fill="#222">5</text>
<text x="231.500" y="180.95" text-anchor="middle" font-family="Liberation Serif, serif" font-style="italic" font-size="11.500" fill="#222">0</text>
<text x="231.500" y="243.6" text-anchor="middle" font-family="Liberation Serif, serif" font-style="italic" font-size="11.500" fill="#222">-5</text>
<text x="92" y="255.500" text-anchor="middle" font-family="Liberation Serif, serif" font-style="italic" font-size="11.500" fill="#222">-1000</text>
<text x="129.400" y="255" text-anchor="middle" font-family="Liberation Serif, serif" font-style="italic" font-size="11.500" fill="#222">ms</text>
<line x1="123" y1="256.500" x2="135.500" y2="256.500" stroke="#222" stroke-width="1"/>
<text x="102.300" y="278" text-anchor="middle" font-family="Liberation Serif, serif" font-style="italic" font-size="11.500" fill="#222">-800</text>
<text x="129.4" y="266.800" text-anchor="middle" font-family="Liberation Serif, serif" font-style="italic" font-size="11.500" fill="#222">-600</text>
<text x="156.9" y="266.800" text-anchor="middle" font-family="Liberation Serif, serif" font-style="italic" font-size="11.500" fill="#222">-400</text>
<text x="184.8" y="266.800" text-anchor="middle" font-family="Liberation Serif, serif" font-style="italic" font-size="11.500" fill="#222">-200</text>
<rect x="205.300" y="256.500" width="13.500" height="12.800" rx="3" fill="#800080"/>
<text x="212" y="266.800" text-anchor="middle" font-family="Liberation Serif, serif" font-style="italic" font-size="11.500" fill="#fff">0</text>
</g>
<rect x="127.500" y="367" width="69" height="48.500" rx="5" fill="#fff" stroke="#d4d4d4" stroke-width="1.200"/>
<text x="162" y="397.300" text-anchor="middle" font-family="Liberation Sans, sans-serif" font-weight="bold" font-size="17" fill="#0b57b8">name</text>
<line x1="83" y1="488.5" x2="240" y2="488.5" stroke="#ececec" stroke-width="2"/>
<line x1="83" y1="685.5" x2="240" y2="685.5" stroke="#ececec" stroke-width="2"/>
<line x1="83" y1="883.5" x2="240" y2="883.5" stroke="#ececec" stroke-width="2"/>
<rect x="63.500" y="493.500" width="196" height="187" rx="5" fill="#fff" stroke="#d6d6d6" stroke-width="1.300"/>
<g filter="url(#gs)">
<line x1="109.68" y1="665.72" x2="106.81" y2="669.82" stroke="#000" stroke-width="2.6"/>
<line x1="101.51" y1="661.27" x2="99.23" y2="663.91" stroke="#666" stroke-width="2.0"/>
<line x1="94.82" y1="654.87" x2="92.28" y2="657.27" stroke="#666" stroke-width="2.0"/>
<line x1="88.81" y1="647.83" x2="86.03" y2="649.96" stroke="#666" stroke-width="2.0"/>
<line x1="83.53" y1="640.22" x2="80.56" y2="642.06" stroke="#666" stroke-width="2.0"/>
<line x1="80.41" y1="631.45" x2="75.91" y2="633.65" stroke="#000" stroke-width="2.6"/>
<line x1="75.43" y1="623.59" x2="72.14" y2="624.8" stroke="#666" stroke-width="2.0"/>
<line x1="72.67" y1="614.76" x2="69.28" y2="615.63" stroke="#666" stroke-width="2.0"/>
<line x1="70.83" y1="605.68" x2="67.37" y2="606.21" stroke="#666" stroke-width="2.0"/>
<line x1="69.91" y1="596.47" x2="66.41" y2="596.64" stroke="#666" stroke-width="2.0"/>
<line x1="71.42" y1="587.29" x2="66.43" y2="587.03" stroke="#000" stroke-width="2.6"/>
<line x1="70.88" y1="578" x2="67.42" y2="577.47" stroke="#666" stroke-width="2.0"/>
<line x1="72.75" y1="568.94" x2="69.37" y2="568.05" stroke="#666" stroke-width="2.0"/>
<line x1="75.54" y1="560.11" x2="72.26" y2="558.89" stroke="#666" stroke-width="2.0"/>
<line x1="79.2" y1="551.6" x2="76.06" y2="550.06" stroke="#666" stroke-width="2.0"/>
<line x1="84.98" y1="544.31" x2="80.74" y2="541.66" stroke="#000" stroke-width="2.6"/>
<line x1="89" y1="535.92" x2="86.24" y2="533.77" stroke="#666" stroke-width="2.0"/>
<line x1="95.04" y1="528.9" x2="92.5" y2="526.49" stroke="#666" stroke-width="2.0"/>
<line x1="101.75" y1="522.53" x2="99.48" y2="519.87" stroke="#666" stroke-width="2.0"/>
<line x1="109.08" y1="516.86" x2="107.08" y2="513.99" stroke="#666" stroke-width="2.0"/>
<line x1="117.67" y1="513.28" x2="115.24" y2="508.91" stroke="#000" stroke-width="2.6"/>
<line x1="125.25" y1="507.9" x2="123.88" y2="504.68" stroke="#666" stroke-width="2.0"/>
<line x1="133.94" y1="504.69" x2="132.89" y2="501.35" stroke="#666" stroke-width="2.0"/>
<line x1="142.9" y1="502.37" x2="142.2" y2="498.94" stroke="#666" stroke-width="2.0"/>
<line x1="152.05" y1="500.97" x2="151.7" y2="497.49" stroke="#666" stroke-width="2.0"/>
<line x1="161.3" y1="502" x2="161.3" y2="497" stroke="#000" stroke-width="2.6"/>
<line x1="170.55" y1="500.97" x2="170.9" y2="497.49" stroke="#666" stroke-width="2.0"/>
<line x1="179.7" y1="502.37" x2="180.4" y2="498.94" stroke="#666" stroke-width="2.0"/>
<line x1="188.66" y1="504.69" x2="189.71" y2="501.35" stroke="#666" stroke-width="2.0"/>
<line x1="197.35" y1="507.9" x2="198.72" y2="504.68" stroke="#666" stroke-width="2.0"/>
<line x1="204.93" y1="513.28" x2="207.36" y2="508.91" stroke="#000" stroke-width="2.6"/>
<line x1="213.52" y1="516.86" x2="215.52" y2="513.99" stroke="#666" stroke-width="2.0"/>
<line x1="220.85" y1="522.53" x2="223.12" y2="519.87" stroke="#666" stroke-width="2.0"/>
<line x1="227.56" y1="528.9" x2="230.1" y2="526.49" stroke="#666" stroke-width="2.0"/>
<line x1="233.6" y1="535.92" x2="236.36" y2="533.77" stroke="#666" stroke-width="2.0"/>
<line x1="237.62" y1="544.31" x2="241.86" y2="541.66" stroke="#000" stroke-width="2.6"/>
<line x1="243.4" y1="551.6" x2="246.54" y2="550.06" stroke="#666" stroke-width="2.0"/>
<line x1="247.06" y1="560.11" x2="250.34" y2="558.89" stroke="#666" stroke-width="2.0"/>
<line x1="249.85" y1="568.94" x2="253.23" y2="568.05" stroke="#666" stroke-width="2.0"/>
<line x1="251.72" y1="578" x2="255.18" y2="577.47" stroke="#666" stroke-width="2.0"/>
<line x1="251.18" y1="587.29" x2="256.17" y2="587.03" stroke="#000" stroke-width="2.6"/>
<line x1="252.69" y1="596.47" x2="256.19" y2="596.64" stroke="#666" stroke-width="2.0"/>
<line x1="251.77" y1="605.68" x2="255.23" y2="606.21" stroke="#666" stroke-width="2.0"/>
<line x1="249.93" y1="614.76" x2="253.32" y2="615.63" stroke="#666" stroke-width="2.0"/>
<line x1="247.17" y1="623.59" x2="250.46" y2="624.8" stroke="#666" stroke-width="2.0"/>
<line x1="242.19" y1="631.45" x2="246.69" y2="633.65" stroke="#f00" stroke-width="2.6"/>
<line x1="239.07" y1="640.22" x2="242.04" y2="642.06" stroke="#f00" stroke-width="2.0"/>
<line x1="233.79" y1="647.83" x2="236.57" y2="649.96" stroke="#f00" stroke-width="2.0"/>
<line x1="227.78" y1="654.87" x2="230.32" y2="657.27" stroke="#f00" stroke-width="2.0"/>
<line x1="221.09" y1="661.27" x2="223.37" y2="663.91" stroke="#f00" stroke-width="2.0"/>
<line x1="212.92" y1="665.72" x2="215.79" y2="669.82" stroke="#f00" stroke-width="2.6"/>
<line x1="204.44" y1="613.04" x2="243.99" y2="632.33" stroke="#cdcdcd" stroke-width="1.900"/>
<text x="120.86" y="653.95" text-anchor="middle" font-family="Liberation Serif, serif" font-style="italic" font-weight="bold" font-size="12.300" fill="#222">-1.0</text>
<text x="97.94" y="627.11" text-anchor="middle" font-family="Liberation Serif, serif" font-style="italic" font-weight="bold" font-size="12.300" fill="#222">-0.8</text>
<text x="90.9" y="592.51" text-anchor="middle" font-family="Liberation Serif, serif" font-style="italic" font-weight="bold" font-size="12.300" fill="#222">-0.6</text>
<text x="101.51" y="558.84" text-anchor="middle" font-family="Liberation Serif, serif" font-style="italic" font-weight="bold" font-size="12.300" fill="#222">-0.4</text>
<text x="127.12" y="534.54" text-anchor="middle" font-family="Liberation Serif, serif" font-style="italic" font-weight="bold" font-size="12.300" fill="#222">-0.2</text>
<text x="161.3" y="525.7" text-anchor="middle" font-family="Liberation Serif, serif" font-style="italic" font-weight="bold" font-size="12.300" fill="#222">-0.0</text>
<text x="195.48" y="534.54" text-anchor="middle" font-family="Liberation Serif, serif" font-style="italic" font-weight="bold" font-size="12.300" fill="#222">0.2</text>
<text x="221.09" y="558.84" text-anchor="middle" font-family="Liberation Serif, serif" font-style="italic" font-weight="bold" font-size="12.300" fill="#222">0.4</text>
<text x="231.7" y="592.51" text-anchor="middle" font-family="Liberation Serif, serif" font-style="italic" font-weight="bold" font-size="12.300" fill="#222">0.6</text>
<text x="224.66" y="627.11" text-anchor="middle" font-family="Liberation Serif, serif" font-style="italic" font-weight="bold" font-size="12.300" fill="#f33">0.8</text>
<text x="201.74" y="653.95" text-anchor="middle" font-family="Liberation Serif, serif" font-style="italic" font-weight="bold" font-size="12.300" fill="#f33">1.0</text>
<polygon points="157.3,592 160.7,506 161.9,506 165.3,592" fill="#0b57b8"/>
<circle cx="161.3" cy="592" r="9.500" fill="#cfcfcf"/>
<text x="162.300" y="620.300" text-anchor="middle" font-family="Liberation Serif, serif" font-style="italic" font-size="11.500" fill="#1e6fc8">0</text>
</g>
<text x="162" y="988.300" text-anchor="middle" font-family="Liberation Sans, sans-serif" font-weight="bold" font-size="17" fill="#000">name</text>
</svg>
<!-- ===== bottom control rows ===== -->
<style>
.ui17{font-size:17px;transform-origin:0 50%;transform:scaleX(0.945)}
.inp{position:absolute;border:1px solid #c4c4c4;background:#fff}
.btn{position:absolute;background:#fff;border-radius:7px;box-shadow:0 0 6px rgba(0,0,0,.14)}
.teal{color:#1fb89a}
</style>
<div class="t ui17" style="left:301px;top:711.500px">Δt:</div>
<div class="inp" style="left:336px;top:706px;width:48px;height:25px"></div>
<div class="abs" style="left:358px;top:707px;width:1px;height:23px;background:#ddd"></div>
<div class="t ui17" style="left:343.500px;top:711.500px">0</div>
<svg style="left:368px;top:709px" width="9" height="20" viewBox="0 0 9 20"><path d="M4.500 0.500 8.500 8h-8zM4.500 19.500 8.500 12h-8z" fill="#1565c0"/></svg>
<div class="t ui17" style="left:399px;top:711.500px;transform:none">ms</div>
<div class="t" style="left:449px;top:712px;font-size:16px">缓冲区上限:</div>
<div class="inp" style="left:547px;top:706px;width:51px;height:25px"></div>
<div class="t ui17" style="left:555px;top:711.500px">1000</div>
<div class="t ui17" style="left:612.500px;top:711.500px;transform:none">/ch</div>
<div class="t" style="left:666px;top:712px;font-size:16.400px">Auto点数对齐:</div>
<div class="inp" style="left:785px;top:706px;width:75px;height:25px"></div>
<div class="abs" style="left:835px;top:707px;width:1px;height:23px;background:#ddd"></div>
<div class="t ui17" style="left:793px;top:711.500px">1000</div>
<svg style="left:844px;top:709px" width="9" height="20" viewBox="0 0 9 20"><path d="M4.500 0.500 8.500 8h-8zM4.500 19.500 8.500 12h-8z" fill="#1565c0"/></svg>
<div class="t" style="left:1642px;top:710.500px;font-size:18px;font-weight:bold;font-style:italic;color:#222">Auto</div>

<!-- timeline slider -->
<div class="abs" style="left:296px;top:754px;width:1176px;height:7px;border-radius:3px;background:linear-gradient(#cdbbc3,#d8c9cf 45%,#e6dde1)"></div>
<div class="abs" style="left:1050px;top:754px;width:141px;height:7px;background:#6dbfae"></div>
<div class="abs" style="left:1119.500px;top:748px;width:1.500px;height:8px;background:#bbb"></div>
<div class="abs" style="left:1043px;top:750px;width:15px;height:15px;border-radius:50%;background:#f80000"></div>
<div class="abs" style="left:1113px;top:736.500px;width:14.500px;height:14.500px;border-radius:50%;background:#1fb89a"></div>
<div class="abs" style="left:1464px;top:749.500px;width:15px;height:15px;border-radius:50%;background:#800080"></div>

<!-- info row -->
<svg style="left:302px;top:771px" width="20" height="21" viewBox="0 0 20 21"><path d="M5.500 0.800h9l1.800 3h-12.600z M0.500 3.800h19v2.300H0.500z M2.500 8.300h15V18.500a2 2 0 0 1-2 2h-11a2 2 0 0 1-2-2z" fill="#000"/><path d="M7.200 10.500v7M12.800 10.500v7" stroke="#fff" stroke-width="1.900"/></svg>
<div class="t ser" style="left:342.500px;top:775px;font-size:14.500px;color:#d8c6cf">837</div>
<div class="t" style="left:392px;top:773px;font-size:19px;transform:skewX(-8deg)">/</div>
<div class="t ser" style="left:428.500px;top:775px;font-size:14.500px;color:#d8c6cf">837</div>
<div class="abs" style="left:479px;top:774px;width:2px;height:17px;background:#1a2340"></div>
<div class="t ser" style="left:511px;top:775px;font-size:14.500px;color:#1fb89a">96</div>
<div class="t ser" style="left:551.500px;top:775.500px;font-size:14.400px;color:#2a5fd0">0ms/X-div</div>
<div class="abs" style="left:284px;top:805px;width:1416px;height:1px;background:#f1f1f1"></div>

<!-- toolbar -->
<div class="t" style="left:307.500px;top:821px;font-size:18.300px;font-style:italic;color:#111;-webkit-text-stroke:0.45px #111;transform-origin:0 50%;transform:scaleX(0.915)">Abc</div>
<div class="vsep" style="left:356.500px;top:820px;height:19px"></div>
<div class="btn" style="left:369px;top:814px;width:29.500px;height:30px"></div>
<svg style="left:378px;top:816px" width="18" height="24" viewBox="0 0 18 24" fill="none" stroke="#1fb89a" stroke-width="3" stroke-linejoin="miter"><path d="M6.300 3.500V14.300l7.600 6.400"/></svg>
<div class="btn" style="left:409px;top:814px;width:45.500px;height:30px"></div>
<div class="t teal" style="left:413.500px;top:820.500px;font-size:18.800px;font-style:italic;-webkit-text-stroke:0.3px #1fb89a;transform-origin:0 50%;transform:scaleX(0.8)">Rx</div>
<svg style="left:440.500px;top:826.500px" width="9" height="6" viewBox="0 0 9 6" fill="none" stroke="#b4b4b4" stroke-width="1.200"><path d="M1 1l3.500 3.500L8 1"/></svg>
<div class="btn" style="left:465px;top:814px;width:29.500px;height:30px"></div>
<div class="t teal" style="left:470px;top:820.500px;font-size:18.800px;font-style:italic;-webkit-text-stroke:0.3px #1fb89a;transform-origin:0 50%;transform:scaleX(0.82)">Tx</div>
<div class="vsep" style="left:504.500px;top:820px;height:19px"></div>
<svg style="left:522px;top:818.500px" width="20" height="20" viewBox="0 0 20 20" fill="none" stroke="#000"><path d="M0.800 2.300h11.400M6.500 2.300v11.500M3.600 13.700h5.800" stroke-width="2.600"/><path d="M1.200 1.500v4M11.800 1.500v4" stroke-width="1.500"/><path d="M13.700 3.400h5.800M13.700 8.600h5.800M13.700 13.800h5.800" stroke-width="2.300"/><path d="M0 18.600h20" stroke-width="2.300"/></svg>
<svg style="left:564px;top:821.500px" width="15" height="15" viewBox="0 0 15 15" stroke="#000" stroke-width="3.100"><path d="M7.500 0v15M0 7.500h15"/></svg>
<div class="abs" style="left:604px;top:827.500px;width:15px;height:3.100px;background:#000"></div>
<div class="vsep" style="left:636.500px;top:820px;height:19px"></div>
<svg style="left:653px;top:820.500px" width="21" height="17" viewBox="0 0 21 17" fill="none" stroke="#000" stroke-width="1.400"><path d="M2 5.200l4 6.800M8.600 11.800 12.400 2.800M13.400 2.500l4.800 7"/><circle cx="7.300" cy="13.300" r="2.100"/><circle cx="1.900" cy="4.800" r="1.400" fill="#000"/><circle cx="12.900" cy="2" r="1.500" fill="#000"/><circle cx="18.700" cy="9.800" r="1.400" fill="#000"/></svg>
<div class="t ui17" style="left:685.500px;top:821px">UTF-8</div>
<svg style="left:1622px;top:819px" width="6" height="20" viewBox="0 0 6 20"><circle cx="3" cy="3" r="2"/><circle cx="3" cy="10" r="2"/><circle cx="3" cy="17" r="2"/></svg>
<div class="vsep" style="left:1650.500px;top:820px;height:19px;width:1.500px"></div>
<svg style="left:1666px;top:819px" width="22" height="20" viewBox="0 0 22 20"><path d="M12.500 1.500 20 9l-7.500 7.500H6.500L2 12z" fill="none" stroke="#000" stroke-width="1.700" stroke-linejoin="round"/><path d="M12.500 1.500 20 9l-3.800 3.800L8.700 5.300z" fill="#000"/><path d="M9 18.500h12" stroke="#000" stroke-width="1.500"/></svg>

<!-- log -->
<style>.lg{position:absolute;left:300.800px;white-space:nowrap;font-family:"Liberation Serif",serif;font-style:italic;font-size:13.700px;line-height:18px;color:#0a8f14}.lg b{font-weight:normal;color:#1e88e5}.lg i{letter-spacing:0.31px}</style>
<div class="lg" style="top:849px"><b>[15:14:31.660]</b> <i>0.70,0.70,0.49,0.50</i></div>
<div class="lg" style="top:867px"><b>[15:14:31.660]</b> <i>0.86,0.50,0.43,0.25</i></div>
<div class="lg" style="top:885px"><b>[15:14:31.660]</b> <i>0.96,0.25,0.25,0.06</i></div>
<div class="lg" style="top:903px"><b>[15:14:31.660]</b> <i>1.00,0.00,0.00,0.00</i></div>
<div class="lg" style="top:921px"><b>[15:14:31.660]</b> <i>0.96,-0.25,-0.24,0.06</i></div>
<div class="lg" style="top:939px"><b>[15:14:31.660]</b> <i>0.86,-0.49,-0.43,0.24</i></div>
<div class="lg" style="top:957px"><b>[15:14:31.660]</b> <i>0.70,-0.70,-0.49,0.49</i></div>

<!-- input row -->
<div class="abs" style="left:290px;top:980px;width:1410px;height:1px;background:#dcdcdc"></div>
<div class="abs" style="left:290px;top:1022px;width:1410px;height:1px;background:#dcdcdc"></div>
<div class="btn" style="left:290.500px;top:987px;width:48px;height:30px"></div>
<div class="t teal" style="left:299.500px;top:993px;font-size:18.300px;font-style:italic;-webkit-text-stroke:0.3px #1fb89a;transform-origin:0 50%;transform:scaleX(0.915)">Abc</div>
<svg style="left:347px;top:992px" width="21" height="20" viewBox="0 0 21 20"><path d="M2.500 1h6l2 2.500h8a2 2 0 0 1 2 2V17a2 2 0 0 1-2 2h-16a2 2 0 0 1-2-2V3a2 2 0 0 1 2-2z" fill="#000"/><path d="M4.500 11.500h11M11.800 7.500l4 4-4 4" fill="none" stroke="#fff" stroke-width="1.700"/></svg>
<div class="vsep" style="left:376.500px;top:988px;height:27px"></div>
<div class="abs" style="left:1435.500px;top:983px;width:5.500px;height:37px;background:#d9d9d9"></div>
<svg style="left:1447px;top:992px" width="22" height="20" viewBox="0 0 22 20"><path d="M12.500 1.500 20 9l-7.500 7.500H6.500L2 12z" fill="none" stroke="#000" stroke-width="1.700" stroke-linejoin="round"/><path d="M12.500 1.500 20 9l-3.800 3.800L8.700 5.300z" fill="#000"/><path d="M9 18.500h12" stroke="#000" stroke-width="1.500"/></svg>
<div class="vsep" style="left:1477px;top:988px;height:27px"></div>
<svg style="left:1488px;top:992px" width="19" height="20" viewBox="0 0 19 20" fill="none" stroke="#111" stroke-width="1.600" stroke-linejoin="round"><path d="M4.500 1.500h11.500a1.500 1.500 0 0 1 1.500 1.500v2h-3"/><path d="M4.500 1.500a1.500 1.500 0 0 0-1.500 1.500v12"/><path d="M14.500 3.500v13a2 2 0 0 1-2 2h-10a1.500 1.500 0 0 1-1.500-1.500v-2h11.500v1.500"/><path d="M6 6h6M6 9h6M6 12h4" stroke-width="1.300"/></svg>
<svg style="left:1514.500px;top:999px" width="9" height="6" viewBox="0 0 9 6" fill="none" stroke="#aaa" stroke-width="1.200"><path d="M1 1l3.500 3.500L8 1"/></svg>
<div class="inp" style="left:1533px;top:988px;width:65px;height:27px;border-color:#bdbdbd"></div>
<div class="t ui17" style="left:1548px;top:993.500px;transform:scaleX(1.13)">\n</div>
<svg style="left:1581px;top:997px" width="9" height="9" viewBox="0 0 9 9"><path d="M0 0.500h9L4.500 8.500z" fill="#1565c0"/></svg>
<div class="btn" style="left:1602.500px;top:985px;width:97px;height:33px"></div>
<div class="t" style="left:1614px;top:994.500px;font-size:16px;color:#1565c0;transform-origin:0 50%;transform:scaleX(0.955)">发送(S)</div>
<svg style="left:1680.500px;top:999px" width="9" height="6" viewBox="0 0 9 6" fill="none" stroke="#aaa" stroke-width="1.200"><path d="M1 1l3.500 3.500L8 1"/></svg>
<!-- ===== right data panel ===== -->
<style>
.eye{position:absolute;width:22px;height:14px}
.rl{position:absolute;white-space:nowrap;line-height:1;font-size:14px;font-weight:bold;color:#111;left:1738px}
.rv{position:absolute;white-space:nowrap;line-height:1;font-family:"Liberation Serif",serif;font-style:italic;font-size:14.100px;right:27px;text-align:right}
.rn{position:absolute;white-space:nowrap;line-height:1;font-size:17px;font-weight:bold;left:1768px}
</style>
<svg class="eye" style="left:1734px;top:47px" viewBox="0 0 22 14"><path d="M1.800 9.800C2.600 4.800 6.300 1.300 11 1.300s8.400 3.500 9.200 8.500" fill="none" stroke="#111" stroke-width="1.700" stroke-linecap="round"/><circle cx="11" cy="9.800" r="3.300" fill="none" stroke="#111" stroke-width="1.600"/></svg>
<div class="t" style="left:1768px;top:46px;font-size:18.500px;font-weight:bold;color:#0b57b8">数据</div>
<svg style="left:1879px;top:52px" width="20" height="5" viewBox="0 0 20 5"><circle cx="2.500" cy="2.500" r="1.900"/><circle cx="10" cy="2.500" r="1.900"/><circle cx="17.500" cy="2.500" r="1.900"/></svg>
<div class="abs" style="left:1730px;top:80px;width:173px;height:2px;background:#cfcfcf"></div>
<!-- card -->
<div class="abs" style="left:1730px;top:95px;width:173.500px;height:179.500px;background:#fff;box-shadow:0 0 6px rgba(0,0,0,.16);border-radius:2px"></div>
<svg class="eye" style="left:1734px;top:103px" viewBox="0 0 22 14"><path d="M1.800 9.800C2.600 4.800 6.300 1.300 11 1.300s8.400 3.500 9.200 8.500" fill="none" stroke="#111" stroke-width="1.700" stroke-linecap="round"/><circle cx="11" cy="9.800" r="3.300" fill="none" stroke="#111" stroke-width="1.600"/></svg>
<div class="rn" style="top:102px;color:#ff0080">I0</div>
<div class="rv" style="top:104px;color:#ff0080">0.700000</div>
<div class="abs" style="left:1738px;top:125px;width:157px;height:1px;background:#d0d0d0"></div>
<div class="rl" style="top:142px">数据名称</div>
<div class="abs" style="left:1867px;top:137px;width:28px;height:23px;border:1px solid #c8c8c8;background:#fff"></div>
<div class="t" style="left:1874px;top:141px;font-size:16px">I0</div>
<div class="rl" style="top:175px">颜色</div>
<div class="abs" style="left:1867px;top:168px;width:28px;height:28px;background:#ff0080"></div>
<div class="rl" style="top:210px">增益和偏置</div>
<svg style="left:1874px;top:207px" width="13" height="20" viewBox="0 0 13 20" fill="none" stroke="#000" stroke-width="3"><path d="M11.500 1.500 2.500 10l9 8.500"/></svg>
<div class="rl" style="top:245px">小数位数</div>
<svg style="left:1874px;top:241px" width="13" height="20" viewBox="0 0 13 20" fill="none" stroke="#000" stroke-width="3"><path d="M11.500 1.500 2.500 10l9 8.500"/></svg>
<!-- other channels -->
<svg class="eye" style="left:1734px;top:293px" viewBox="0 0 22 14"><path d="M1.800 9.800C2.600 4.800 6.300 1.300 11 1.300s8.400 3.500 9.200 8.500" fill="none" stroke="#111" stroke-width="1.700" stroke-linecap="round"/><circle cx="11" cy="9.800" r="3.300" fill="none" stroke="#111" stroke-width="1.600"/></svg>
<div class="rn" style="top:292px;color:#0a800a">I1</div>
<div class="rv" style="top:294px;color:#0a8f14">-0.700000</div>
<svg class="eye" style="left:1734px;top:333px" viewBox="0 0 22 14"><path d="M1.800 9.800C2.600 4.800 6.300 1.300 11 1.300s8.400 3.500 9.200 8.500" fill="none" stroke="#111" stroke-width="1.700" stroke-linecap="round"/><circle cx="11" cy="9.800" r="3.300" fill="none" stroke="#111" stroke-width="1.600"/></svg>
<div class="rn" style="top:332px;color:#0000ff">I2</div>
<div class="rv" style="top:334px;color:#0000ff">-0.490000</div>
<svg class="eye" style="left:1734px;top:373px" viewBox="0 0 22 14"><path d="M1.800 9.800C2.600 4.800 6.300 1.300 11 1.300s8.400 3.500 9.200 8.500" fill="none" stroke="#111" stroke-width="1.700" stroke-linecap="round"/><circle cx="11" cy="9.800" r="3.300" fill="none" stroke="#111" stroke-width="1.600"/></svg>
<div class="rn" style="top:372px;color:#ffa500">I3</div>
<div class="rv" style="top:374px;color:#ffa500">0.490000</div>
<!-- window rounded corners -->
<svg style="left:0;top:0" width="8" height="8" viewBox="0 0 8 8"><path d="M0 0h8A8 8 0 0 0 0 8z" fill="#d0dbe8"/></svg>
<svg style="left:1912px;top:0" width="8" height="8" viewBox="0 0 8 8"><path d="M8 0H0A8 8 0 0 1 8 8z" fill="#d0dbe8"/></svg>
<svg style="left:0;top:1022px" width="8" height="8" viewBox="0 0 8 8"><path d="M0 8h8A8 8 0 0 1 0 0z" fill="#d0dbe8"/></svg>
<svg style="left:1912px;top:1022px" width="8" height="8" viewBox="0 0 8 8"><path d="M8 8H0A8 8 0 0 0 8 0z" fill="#d0dbe8"/></svg>
</body>
</html>
